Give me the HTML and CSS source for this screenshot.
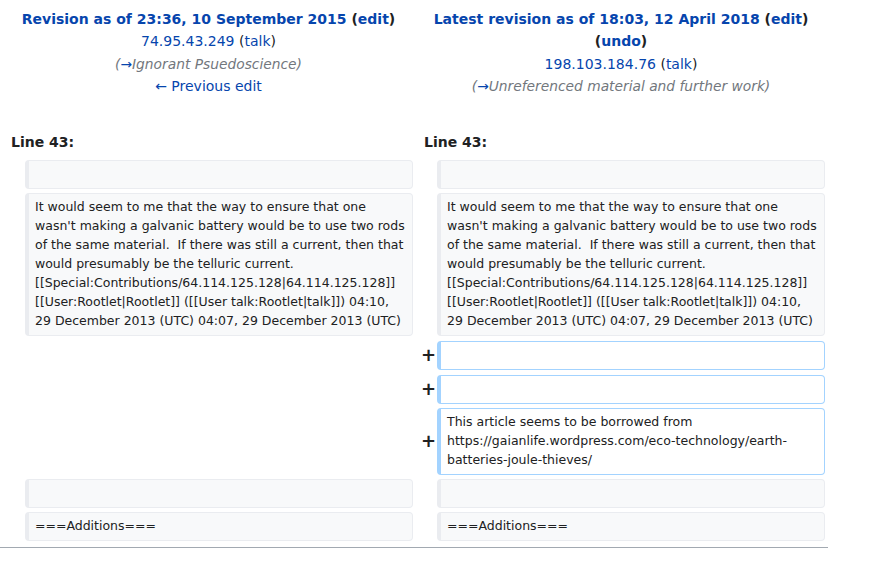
FILE: index.html
```html
<!DOCTYPE html>
<html lang="en">
<head>
<meta charset="utf-8">
<title>Diff</title>
<link rel="stylesheet" href="styles.css">
</head>
<body>
<table class="diff">
  <colgroup>
    <col class="col-marker-l">
    <col class="col-content">
    <col class="col-marker-r">
    <col class="col-content">
  </colgroup>
  <tr class="diff-title">
    <td colspan="2" class="title-cell">
      <div class="title-main"><a href="#">Revision as of 23:36, 10 September 2015</a> <span class="paren">(<a href="#">edit</a>)</span></div>
      <div><a href="#">74.95.43.249</a> <span class="paren">(<a href="#">talk</a>)</span></div>
      <div class="summary">(<a href="#" class="arrow">→</a>Ignorant Psuedoscience)</div>
      <div><a href="#">← Previous edit</a></div>
    </td>
    <td colspan="2" class="title-cell">
      <div class="title-main"><a href="#">Latest revision as of 18:03, 12 April 2018</a> <span class="paren">(<a href="#">edit</a>)</span><br><span class="paren">(<a href="#">undo</a>)</span></div>
      <div><a href="#">198.103.184.76</a> <span class="paren">(<a href="#">talk</a>)</span></div>
      <div class="summary">(<a href="#" class="arrow">→</a>Unreferenced material and further work)</div>
    </td>
  </tr>
  <tr>
    <td colspan="2" class="lineno">Line 43:</td>
    <td colspan="2" class="lineno">Line 43:</td>
  </tr>
  <tr>
    <td class="marker"></td>
    <td class="content"><div class="line context">&nbsp;</div></td>
    <td class="marker"></td>
    <td class="content"><div class="line context">&nbsp;</div></td>
  </tr>
  <tr>
    <td class="marker"></td>
    <td class="content"><div class="line context">It would seem to me that the way to ensure that one wasn't making a galvanic battery would be to use two rods of the same material.  If there was still a current, then that would presumably be the telluric current. [[Special:Contributions/64.114.125.128|64.114.125.128]] [[User:Rootlet|Rootlet]] ([[User talk:Rootlet|talk]]) 04:10, 29 December 2013 (UTC) 04:07, 29 December 2013 (UTC)</div></td>
    <td class="marker"></td>
    <td class="content"><div class="line context">It would seem to me that the way to ensure that one wasn't making a galvanic battery would be to use two rods of the same material.  If there was still a current, then that would presumably be the telluric current. [[Special:Contributions/64.114.125.128|64.114.125.128]] [[User:Rootlet|Rootlet]] ([[User talk:Rootlet|talk]]) 04:10, 29 December 2013 (UTC) 04:07, 29 December 2013 (UTC)</div></td>
  </tr>
  <tr class="gap">
    <td colspan="2" class="empty"></td>
    <td class="marker"><span class="plus">+</span></td>
    <td class="content"><div class="line added">&nbsp;</div></td>
  </tr>
  <tr class="gap">
    <td colspan="2" class="empty"></td>
    <td class="marker"><span class="plus">+</span></td>
    <td class="content"><div class="line added">&nbsp;</div></td>
  </tr>
  <tr>
    <td colspan="2" class="empty"></td>
    <td class="marker"><span class="plus">+</span></td>
    <td class="content"><div class="line added">This article seems to be borrowed from https://gaianlife.wordpress.com/eco-technology/earth-batteries-joule-thieves/</div></td>
  </tr>
  <tr>
    <td class="marker"></td>
    <td class="content"><div class="line context">&nbsp;</div></td>
    <td class="marker"></td>
    <td class="content"><div class="line context">&nbsp;</div></td>
  </tr>
  <tr>
    <td class="marker"></td>
    <td class="content"><div class="line context">===Additions===</div></td>
    <td class="marker"></td>
    <td class="content"><div class="line context">===Additions===</div></td>
  </tr>
</table>
<div class="footer-rule"></div>
</body>
</html>
```

FILE: styles.css
```css
html, body {
  margin: 0;
  padding: 0;
  background: #ffffff;
}
body {
  font-family: "DejaVu Sans", sans-serif;
  color: #202122;
  font-size: 14px;
}
a {
  color: #0645ad;
  text-decoration: none;
}
.diff {
  width: 829px;
  table-layout: fixed;
  border-collapse: separate;
  border-spacing: 4px;
  margin: 0;
}
.col-marker-l { width: 17px; }
.col-marker-r { width: 16px; }
.col-content { width: 388px; }
.diff td {
  padding: 0;
  box-sizing: border-box;
}
.diff .title-cell {
  text-align: center;
  vertical-align: top;
  line-height: 22.4px;
  padding: 4px 0 20px;
  font-size: 14px;
}
.title-main {
  font-weight: bold;
}
.paren {
  color: #202122;
}
.summary {
  color: #72777d;
  font-style: italic;
  font-size: 13.8px;
}
.summary .arrow {
  color: #0645ad;
  font-style: normal;
}
.diff .lineno {
  font-weight: bold;
  padding: 9px 7px 3px;
  line-height: 22px;
}
.diff .marker {
  text-align: right;
  font-weight: bold;
  font-size: 18px;
  line-height: 1.2;
  vertical-align: middle;
  padding-right: 0;
}
.diff .gap .marker {
  padding-top: 1px;
}
.plus {
  margin-right: -3px;
}
.diff .content {
  vertical-align: top;
}
.diff .gap .content {
  padding-top: 1px;
}
.line {
  font-size: 12.5px;
  line-height: 19px;
  white-space: pre-wrap;
  word-wrap: break-word;
  border-style: solid;
  border-width: 1px 1px 1px 4px;
  border-radius: 4px;
  padding: 3px 6px 5px 6px;
}
.context {
  background: #f8f9fa;
  border-color: #eaecf0;
  color: #202122;
}
.added {
  background: #ffffff;
  border-color: #a3d3ff;
}
.footer-rule {
  width: 828px;
  height: 1px;
  background: #a2a9b1;
  margin-top: 2px;
}
```
